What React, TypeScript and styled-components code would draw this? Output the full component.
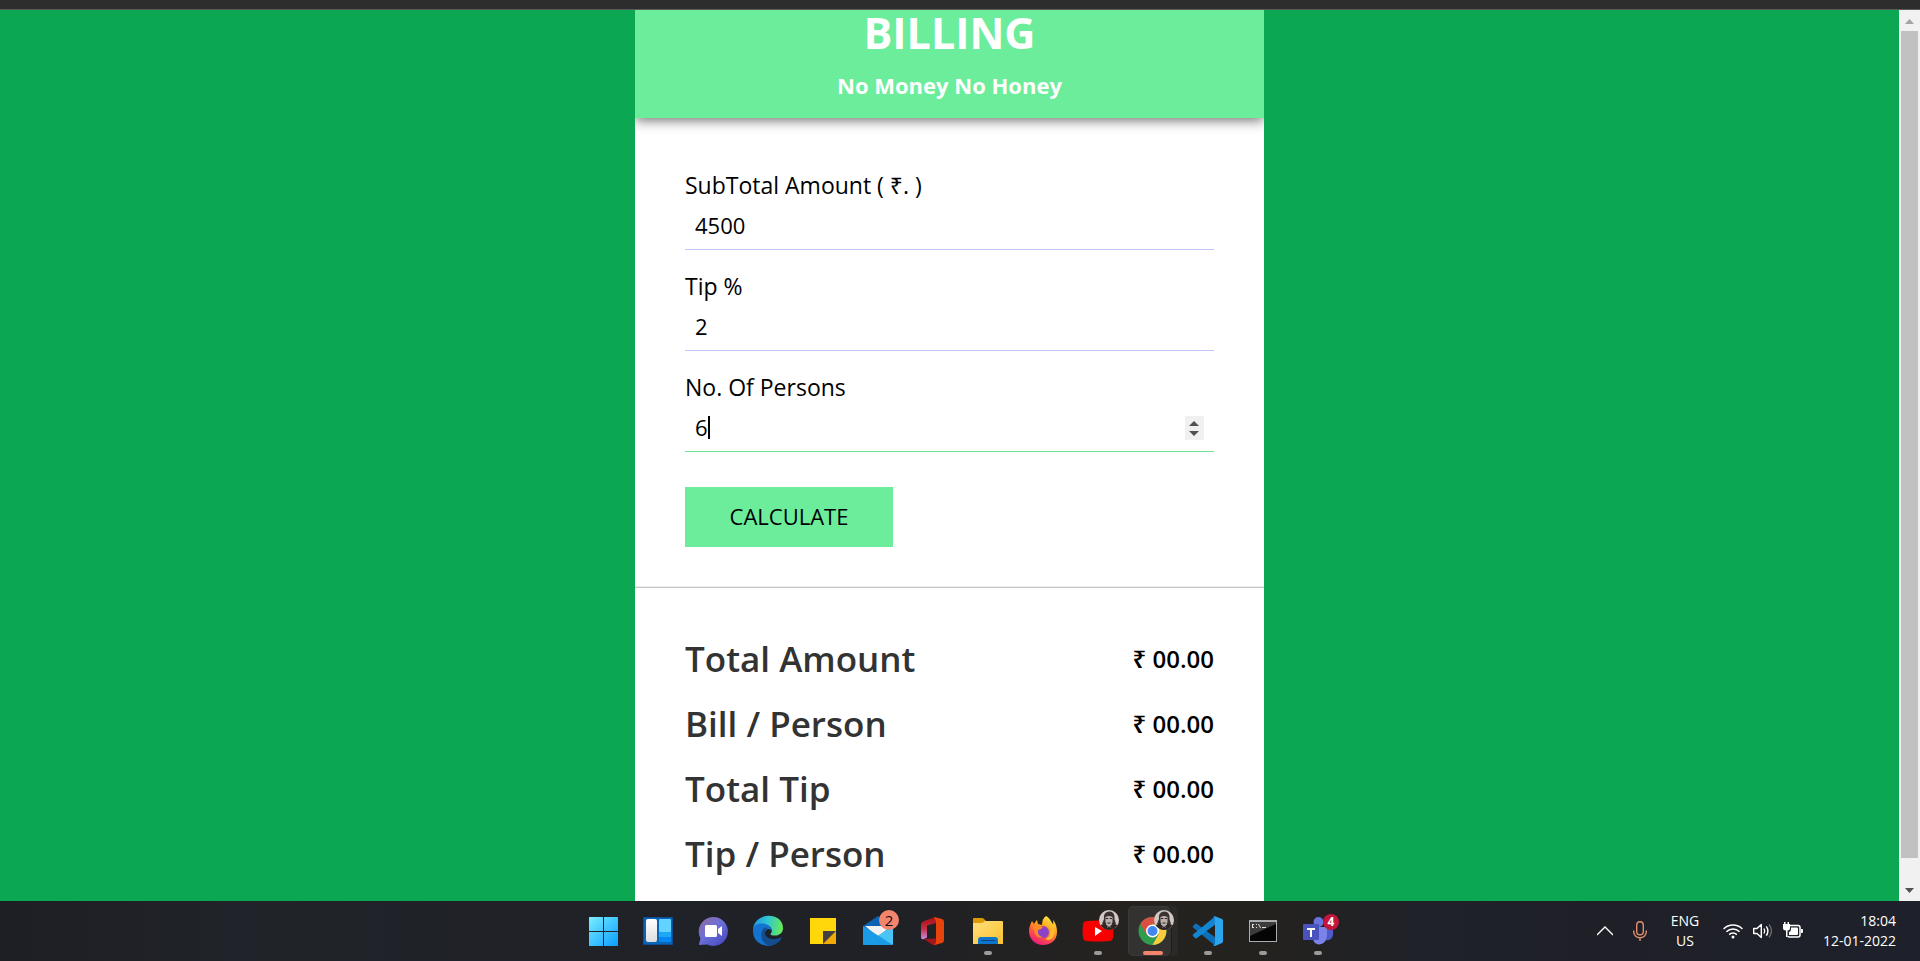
import React, { useState } from 'react';
import styled, { createGlobalStyle } from 'styled-components';

const GlobalStyle = createGlobalStyle`
  *, *::before, *::after { box-sizing: border-box; }
  body {
    margin: 0;
    font-family: "Open Sans", "Noto Sans", sans-serif;
    color: #000;
  }
  h1, h2, p, dl, dt, dd { margin: 0; }
`;

const Desktop = styled.div`
  min-height: 100vh;
  display: flex;
  flex-direction: column;
`;

const BrowserEdge = styled.div`
  height: 10px;
  background: #2d2d2d;
  border-bottom: 1px solid #5c5c5c;
`;

const Viewport = styled.div`
  flex: 1;
  display: flex;
  background: #0ca752;
`;

const Page = styled.main`
  flex: 1;
  display: flex;
  justify-content: center;
`;

const Card = styled.article`
  width: calc(100% / 3 - 4px);
  min-width: 400px;
  background: #fff;
`;

const CardHeader = styled.header`
  height: 108px;
  background: #6bed9c;
  color: #fff;
  text-align: center;
  box-shadow: 0 2px 12px rgba(0, 0, 0, 0.6);
  clip-path: inset(0 0 -20px 0);
`;

const Title = styled.h1`
  font-size: 43px;
  line-height: 46px;
  font-weight: 700;
`;

const Tagline = styled.h2`
  padding-top: 13px;
  font-size: 22px;
  line-height: 32px;
  font-weight: 700;
`;

const BillForm = styled.form`
  display: flex;
  flex-direction: column;
  align-items: flex-start;
  gap: 20px;
  padding: 51px 50px 40px;
  border-bottom: 1px solid #c8c8c8;
  box-shadow: inset 0 -1px 0 #eee;
`;

const Field = styled.div`
  width: 100%;
`;

const FieldLabel = styled.label`
  display: block;
  font-size: 23px;
  line-height: 32px;
`;

const InputBox = styled.div`
  position: relative;
  font-size: 22px;
`;

const Caret = styled.span`
  position: absolute;
  top: 13px;
  width: 2px;
  height: 23px;
  background: #000;
  pointer-events: none;
`;

const Stepper = styled.div`
  position: absolute;
  top: 13px;
  right: 10px;
  width: 19px;
  height: 24px;
  display: flex;
  flex-direction: column;
  background: #f0f0f0;
`;

const StepButton = styled.button`
  flex: 1;
  display: flex;
  align-items: center;
  justify-content: center;
  padding: 0;
  border: 0;
  background: transparent;
`;

const StepArrow = styled.svg`
  display: block;
  width: 10px;
  height: 12px;
`;

const NumberInput = styled.input`
  display: block;
  width: 100%;
  height: 49px;
  padding: 0 10px;
  border: 0;
  border-bottom: 1px solid #c3c5f8;
  outline: none;
  background: transparent;
  color: #000;
  caret-color: transparent;
  font: inherit;
  appearance: textfield;

  &:focus {
    border-bottom-color: #6ce697;
  }
  &::-webkit-inner-spin-button {
    appearance: none;
    margin: 0;
  }
`;

const CalculateButton = styled.button`
  width: 208px;
  height: 60px;
  margin-top: 15px;
  padding: 0 0 2px;
  border: 0;
  background: #6bed9c;
  color: #000;
  font-family: inherit;
  font-size: 22px;
`;

const Results = styled.dl`
  padding: 38px 50px 13px;
`;

const ResultRow = styled.div`
  display: flex;
  align-items: center;
  justify-content: space-between;
  height: 65px;
`;

const ResultName = styled.dt`
  color: #333;
  font-size: 35px;
  font-weight: 600;
`;

const ResultValue = styled.dd`
  font-size: 24px;
  font-weight: 600;
`;

const Scrollbar = styled.div`
  width: 21px;
  display: flex;
  flex-direction: column;
  align-items: center;
  background: #f1f1f1;
`;

const ScrollArrow = styled.svg`
  display: block;
  width: 21px;
  height: 21px;
`;

const ScrollThumb = styled.div`
  flex: 1;
  width: 17px;
  margin-bottom: 22px;
  background: #c1c1c1;
`;

const Taskbar = styled.footer`
  display: grid;
  grid-template-columns: 1fr auto 1fr;
  align-items: center;
  height: 60px;
  background: linear-gradient(90deg, #1d1f24 0%, #202329 12%, #1f2127 45%, #25221f 58%, #24221f 66%, #1f2229 74%, #1f2027 84%, #1e212b 100%);
  color: #fff;
`;

const AppList = styled.nav`
  grid-column: 2;
  display: flex;
  align-items: center;
  gap: 5px;
  padding-left: 1px;
`;

const AppButton = styled.button<{ $active?: boolean; $running?: boolean }>`
  position: relative;
  width: 50px;
  height: 50px;
  padding: 10px;
  border: 0;
  border-radius: 5px;
  background: ${p => (p.$active ? '#343230' : 'transparent')};
  box-shadow: ${p => (p.$active ? 'inset -6px 0 0 #2c2a28, inset -7px 0 0 #1f1d1c, inset 0 0 0 1px #3b3937' : 'none')};

  &::after {
    content: "";
    display: ${p => (p.$running ? 'block' : 'none')};
    position: absolute;
    left: 50%;
    bottom: 1px;
    width: ${p => (p.$active ? 20 : 8)}px;
    height: 4px;
    margin-left: ${p => (p.$active ? -10 : -4)}px;
    border-radius: 2px;
    background: ${p => (p.$active ? '#f4846c' : '#9a9a9a')};
  }
`;

const AppIcon = styled.svg`
  display: block;
  width: 30px;
  height: 30px;
  overflow: visible;
`;

const Badge = styled.span<{ $alert?: boolean }>`
  position: absolute;
  top: ${p => (p.$alert ? 8 : 4)}px;
  left: ${p => (p.$alert ? 30 : 26)}px;
  width: ${p => (p.$alert ? 16 : 20)}px;
  height: ${p => (p.$alert ? 16 : 20)}px;
  border-radius: 50%;
  background: ${p => (p.$alert ? '#c4163a' : '#f4846c')};
  color: ${p => (p.$alert ? '#fff' : '#111')};
  font-family: "Open Sans", sans-serif;
  font-size: ${p => (p.$alert ? 12 : 15)}px;
  font-weight: ${p => (p.$alert ? 700 : 400)};
  line-height: ${p => (p.$alert ? 16 : 20)}px;
  text-align: center;
`;

const AvatarPicture = styled.svg`
  position: absolute;
  top: 4px;
  left: 26px;
  width: 20px;
  height: 20px;
`;

const Tray = styled.div`
  grid-column: 3;
  display: flex;
  align-items: center;
  justify-content: flex-end;
  gap: 20px;
  padding-right: 24px;
`;

const TrayGroup = styled.div`
  display: flex;
  align-items: center;
  gap: 10px;
`;

const TrayIcon = styled.svg<{ $width: number }>`
  display: block;
  width: ${p => p.$width}px;
  height: 20px;
`;

const TrayText = styled.p<{ $end?: boolean }>`
  min-width: 36px;
  font-size: 14px;
  line-height: 20px;
  text-align: ${p => (p.$end ? 'right' : 'center')};
`;

const Avatar = () => (
  <AvatarPicture viewBox="0 0 20 20" aria-hidden="true">
    <circle cx="10" cy="10" r="10" fill="#cfc8c4" />
    <path d="M5 9Q4 2 10 1.500T15.500 9L17 14H3Z" fill="#3a3230" />
    <path d="M6.500 7Q10 5 13.500 7V12Q12 16 10 16T6.500 12Z" fill="#b9b0ab" />
    <path d="M7 8.500H9.200M10.800 8.500H13M8.500 13H11.500" stroke="#2b2322" strokeWidth="1.200" />
    <path d="M1.500 15 6 13.500 10 17 14 13.500 18.500 15Q15 20 10 20T1.500 15Z" fill="#2d2524" />
    <path d="M8 17.500 10 16 12 17.500" stroke="#8d8480" fill="none" />
  </AvatarPicture>
);

type AppEntry = {
  name: string;
  drawing: React.ReactNode;
  running?: boolean;
  active?: boolean;
  extra?: React.ReactNode;
};

const apps: AppEntry[] = [
  {
    name: 'Start',
    drawing: (
      <>
        <linearGradient id="win" x1="0" y1="0" x2="30" y2="30" gradientUnits="userSpaceOnUse">
          <stop stopColor="#7df1ff" /><stop offset="1" stopColor="#0a9cff" />
        </linearGradient>
        <path d="M1.500 1H15V15H1V1.500ZM16 1H29.500L30 1.500V15H16ZM1 16H15V30H1.500L1 29.500ZM16 16H30V29.500L29.500 30H16Z" fill="url(#win)" />
      </>
    ),
  },
  {
    name: 'Widgets',
    drawing: (
      <>
        <linearGradient id="wdg" x2="0" y2="1"><stop stopColor="#fff" /><stop offset="1" stopColor="#dedede" /></linearGradient>
        <rect y="1" width="30" height="28" rx="1" fill="#0c4d96" />
        <rect x="1" y="2" width="28" height="26" fill="#0866b8" />
        <rect x="3" y="3" width="11" height="23" rx="2" fill="url(#wdg)" />
        <rect x="16" y="3" width="12" height="13" rx="1" fill="#62d3ff" />
        <rect x="16" y="16" width="12" height="5" fill="#1da8f5" />
        <rect x="16" y="21" width="12" height="5" rx="1" fill="#0787ef" />
      </>
    ),
  },
  {
    name: 'Chat',
    drawing: (
      <>
        <linearGradient id="cht" x1=".1" y1=".1" x2=".8" y2=".9">
          <stop stopColor="#8a6aa8" /><stop offset=".45" stopColor="#6e71d8" /><stop offset="1" stopColor="#4b4fc4" />
        </linearGradient>
        <path d="M15 1A14.500 14.500 0 1 1 9 28.500L1.500 29Q.5 29 1 28L2.500 22.500A14.500 14.500 0 0 1 15 1Z" fill="url(#cht)" />
        <rect x="7" y="9" width="12" height="12" rx="1.500" fill="#fff" />
        <path d="M20 13 24 10V20L20 17Z" fill="#fff" />
      </>
    ),
  },
  {
    name: 'Edge',
    drawing: (
      <>
        <linearGradient id="edt" x1="0" y1=".5" x2="1" y2=".6">
          <stop stopColor="#2098df" /><stop offset=".45" stopColor="#2fc4d6" /><stop offset="1" stopColor="#6aec52" />
        </linearGradient>
        <path d="M0 14C1-5 30-4 30 12C30 18 25 20 20 19.500C16.500 19 17.500 18 18.500 16.500C20.500 11 14 8 9 8C4 8 1 11 0 14Z" fill="url(#edt)" />
        <path d="M0 14C1 9 5 7 10 7.500C15 8 19 11 18.500 15C16 10.500 11 14 11.500 19C12 25 20 28 28 22C24 29 17 30.500 12.500 29.500C5 28.500-.5 22 0 14Z" fill="#1473cf" />
        <path d="M12 11.500C8 14 7 20 10 25C12 28.500 15 30 18 29.700C22 29 26 26.500 28.500 22.500Q29 21 27.500 21.500C21 24.500 13.500 23 12 18C11.300 15.500 12 13 15 12Z" fill="#124d90" />
      </>
    ),
  },
  {
    name: 'Sticky Notes',
    drawing: (
      <>
        <path d="M2 2H28V28H15L2 28Z" fill="#ffd70a" />
        <path d="M28 15V28H15Z" fill="#f0aa08" />
        <path d="M15 15H28L15 28Z" fill="#44403f" />
      </>
    ),
  },
  {
    name: 'Mail',
    extra: <Badge>2</Badge>,
    drawing: (
      <>
        <path d="M0 10 15 0 30 10V20H0Z" fill="#0b61b2" />
        <path d="M2 10H28L15 21Z" fill="#f1f1f1" />
        <path d="M30 10 0 29H29Q30 29 30 28Z" fill="#48c4f5" />
        <path d="M0 10 30 29H1Q0 29 0 28Z" fill="#1b9be5" />
      </>
    ),
  },
  {
    name: 'Office',
    drawing: (
      <>
        <linearGradient id="off" x2="0" y2="1"><stop stopColor="#a51016" /><stop offset=".5" stopColor="#c62a3f" /><stop offset="1" stopColor="#c98be0" /></linearGradient>
        <path d="M17 1 5 5.500Q3 6.500 3 9V21Q3 24 6 23L9 21.500V9.500L18 7Z" fill="url(#off)" />
        <path d="M6 23 14 28.500Q16 29.500 18 29L22 26 18 22.500Z" fill="#a5161c" />
        <path d="M16 1 24 3Q26 3.500 26 6V24Q26 26.500 24 27L16.500 29 18 26V6Z" fill="#e8430d" />
      </>
    ),
  },
  {
    name: 'File Explorer',
    running: true,
    drawing: (
      <>
        <linearGradient id="fld" x1="0" y1="0" x2="1" y2="1"><stop stopColor="#ffe07c" /><stop offset="1" stopColor="#fbc02f" /></linearGradient>
        <path d="M0 3Q0 2 1 2H9Q10 2 11 3L13 5V9H0Z" fill="#dd9b06" />
        <path d="M0 7H8Q10 7 12 5H29Q30 5 30 6V28H0Z" fill="url(#fld)" />
        <path d="M5 28V24Q5 21 8 21H22Q25 21 25 24V28Z" fill="#0d75cb" />
        <rect x="8" y="24" width="14" height="1" fill="#0a4784" />
      </>
    ),
  },
  {
    name: 'Firefox',
    drawing: (
      <>
        <linearGradient id="ffx" x1=".8" y1="0" x2=".3" y2="1">
          <stop stopColor="#fff044" /><stop offset=".4" stopColor="#ffa01e" /><stop offset=".7" stopColor="#ff4d49" /><stop offset="1" stopColor="#e41b80" />
        </linearGradient>
        <path d="M18 0C23 3 23 6 25 8C26 8 25 5 25 4C28 7 29 12 29 16C29 24 23 29 15 29C7 29 1 23 1 15C1 12 2 9 3 7L4 5 6 8C8 5 8 5 9 4L10 8 14 9C14 5 15 2 18 0Z" fill="url(#ffx)" />
        <circle cx="15" cy="16" r="6" fill="#8a43c7" />
        <path d="M5 11Q9 8 15 11Q13 14 10 14Q9 20 15 21Q10 23 7 18Z" fill="#ff8a22" />
        <path d="M17 8Q25 10 22 18Q21 22 17 23Q23 26 26 19Q28 9 20 7Z" fill="#ffbd2e" />
      </>
    ),
  },
  {
    name: 'YouTube',
    running: true,
    extra: <Avatar />,
    drawing: (
      <>
        <path d="M4 5Q15 4 26 5Q30 5 30 9Q31 15 30 21Q30 25 26 25Q15 26 4 25Q0 25 0 21Q-1 15 0 9Q0 5 4 5Z" fill="#f90000" />
        <path d="M12 11 19 15 12 20Z" fill="#fff" />
      </>
    ),
  },
  {
    name: 'Chrome',
    running: true,
    active: true,
    extra: <Avatar />,
    drawing: (
      <>
        <circle cx="14.500" cy="15" r="14" fill="#2f9d4d" />
        <path d="M14.500 1A14 14 0 0 1 26.600 8H14.500V15L8.400 18.500 2.400 8A14 14 0 0 1 14.500 1Z" fill="#d94f43" />
        <path d="M14.500 8.500H26.800A14 14 0 0 1 14.500 29L20.500 18.500Z" fill="#fccb3d" />
        <circle cx="14.500" cy="15" r="6.500" fill="#fff" />
        <circle cx="14.500" cy="15" r="5" fill="#4286f4" />
      </>
    ),
  },
  {
    name: 'Visual Studio Code',
    running: true,
    drawing: (
      <>
        <path d="M2 8 0 10Q-.5 10.800 0 11.500L22 29.500 23 22 4 8Q3 7.200 2 8Z" fill="#0d6fb8" />
        <path d="M2 22 0 20Q-.5 19.200 0 18.500L22 .5 23 8 4 22Q3 22.800 2 22Z" fill="#1386d3" />
        <path d="M22 .2 29 3Q30 3.500 30 5V25Q30 26.500 29 27L22 30Q21 30 20 29Q22 29 22 27V3Q22 1 20 1Q21 0 22 .2Z" fill="#2aa5ee" />
      </>
    ),
  },
  {
    name: 'Command Prompt',
    running: true,
    drawing: (
      <>
        <rect x="1" y="4" width="28" height="22" fill="#a9adb0" />
        <rect x="2" y="6" width="26" height="19" fill="#050505" />
        <path d="M2 6H28V8L2 20Z" fill="#3c3c3c" />
        <path d="M4 8H6V9H5V11H6V12H4ZM8 8H9V9H8ZM8 11H9V12H8ZM10 8H11L13 12H12ZM14 11H18V12H14Z" fill="#ddd" />
      </>
    ),
  },
  {
    name: 'Teams',
    running: true,
    extra: <Badge $alert>4</Badge>,
    drawing: (
      <>
        <circle cx="15.500" cy="6" r="5" fill="#6b74dc" />
        <path d="M21 11H29Q30 11 30 12V19Q29 25 23 24Z" fill="#5059c9" />
        <path d="M10 11H24V20Q23 28 16 28.500Q11 28 10 23Z" fill="#7b83eb" />
        <rect y="8" width="16" height="16" rx="1" fill="#4a52bd" />
        <path d="M4 12H12V14H9V21H7V14H4Z" fill="#fff" />
      </>
    ),
  },
];

const fields = [
  { id: 'subtotal', label: 'SubTotal Amount ( ₹. )' },
  { id: 'tip', label: 'Tip %' },
  { id: 'persons', label: 'No. Of Persons' },
] as const;

type FieldId = (typeof fields)[number]['id'];

const resultNames = ['Total Amount', 'Bill / Person', 'Total Tip', 'Tip / Person'];

export default function App() {
  const [values, setValues] = useState<Record<FieldId, string>>({ subtotal: '4500', tip: '2', persons: '6' });
  const [focused, setFocused] = useState<FieldId>('persons');
  const [results, setResults] = useState(['00.00', '00.00', '00.00', '00.00']);

  const step = (id: FieldId, by: number) => setValues({ ...values, [id]: String(Number(values[id]) + by) });

  const calculate = (event: React.FormEvent) => {
    event.preventDefault();
    const subtotal = Number(values.subtotal);
    const tip = (subtotal * Number(values.tip)) / 100;
    const persons = Math.max(1, Number(values.persons));
    setResults([subtotal + tip, (subtotal + tip) / persons, tip, tip / persons].map(n => n.toFixed(2)));
  };

  return (
    <Desktop>
      <GlobalStyle />
      <BrowserEdge />
      <Viewport>
        <Page>
          <Card>
            <CardHeader>
              <Title>BILLING</Title>
              <Tagline>No Money No Honey</Tagline>
            </CardHeader>
            <BillForm onSubmit={calculate}>
              {fields.map(f => (
                <Field key={f.id}>
                  <FieldLabel htmlFor={f.id}>{f.label}</FieldLabel>
                  <InputBox>
                    <NumberInput
                      id={f.id}
                      type="number"
                      autoFocus={f.id === 'persons'}
                      value={values[f.id]}
                      onFocus={() => setFocused(f.id)}
                      onChange={e => setValues({ ...values, [f.id]: e.target.value })}
                    />
                    {focused === f.id && (
                      <>
                        <Caret style={{ left: `calc(10px + ${values[f.id].length}ch)` }} />
                        <Stepper>
                          <StepButton type="button" tabIndex={-1} aria-label={`Increase ${f.label}`} onClick={() => step(f.id, 1)}>
                            <StepArrow viewBox="0 0 10 12"><path d="M0 10 5 5 10 10Z" fill="#505050" /></StepArrow>
                          </StepButton>
                          <StepButton type="button" tabIndex={-1} aria-label={`Decrease ${f.label}`} onClick={() => step(f.id, -1)}>
                            <StepArrow viewBox="0 0 10 12"><path d="M0 3 5 8 10 3Z" fill="#505050" /></StepArrow>
                          </StepButton>
                        </Stepper>
                      </>
                    )}
                  </InputBox>
                </Field>
              ))}
              <CalculateButton type="submit">CALCULATE</CalculateButton>
            </BillForm>
            <Results>
              {resultNames.map((name, i) => (
                <ResultRow key={name}>
                  <ResultName>{name}</ResultName>
                  <ResultValue>₹ {results[i]}</ResultValue>
                </ResultRow>
              ))}
            </Results>
          </Card>
        </Page>
        <Scrollbar aria-hidden="true">
          <ScrollArrow viewBox="0 0 21 21"><path d="M6 14 10.500 9 15 14Z" fill="#a3a3a3" /></ScrollArrow>
          <ScrollThumb />
          <ScrollArrow viewBox="0 0 21 21"><path d="M6 8 10.500 13 15 8Z" fill="#505050" /></ScrollArrow>
        </Scrollbar>
      </Viewport>
      <Taskbar>
        <AppList aria-label="Taskbar">
          {apps.map(app => (
            <AppButton key={app.name} type="button" aria-label={app.name} $running={app.running} $active={app.active}>
              <AppIcon viewBox="0 0 30 30">{app.drawing}</AppIcon>
              {app.extra}
            </AppButton>
          ))}
        </AppList>
        <Tray>
          <TrayIcon $width={16} viewBox="0 0 16 20">
            <path d="M0 14 8 6 16 14" fill="none" stroke="#fff" strokeWidth="1.300" />
          </TrayIcon>
          <TrayIcon $width={14} viewBox="0 0 14 20" fill="none" stroke="#e08e6d" strokeWidth="1.400">
            <rect x="3.700" y=".7" width="6.600" height="13" rx="3.300" />
            <path d="M.7 9.500V10.500A6.300 6.300 0 0 0 13.300 10.500V9.500M7 16.800V20" />
          </TrayIcon>
          <TrayText>ENG<br />US</TrayText>
          <TrayGroup>
            <TrayIcon $width={20} viewBox="0 0 20 20" fill="none" stroke="#fff" strokeWidth="1.500">
              <path d="M.6 8A13.300 13.300 0 0 1 19.400 8M3.400 10.800A9.300 9.300 0 0 1 16.600 10.800M6.200 13.600A5.400 5.400 0 0 1 13.800 13.600" />
              <circle cx="10" cy="16" r="1.500" fill="#fff" stroke="none" />
            </TrayIcon>
            <TrayIcon $width={20} viewBox="0 0 20 20" fill="none" stroke="#fff" strokeWidth="1.400">
              <path d="M.7 7.500H4L8.300 3.500V16.500L4 12.500H.7Z" strokeLinejoin="round" />
              <path d="M11 7.500Q12.500 10 11 12.500M13.300 5.300Q16.500 10 13.300 14.700" />
              <path d="M16 3.500Q21 10 16 16.500" stroke="#666a70" />
            </TrayIcon>
            <TrayIcon $width={20} viewBox="0 0 20 20">
              <path d="M6 4.500H15Q17 4.500 17 6.500V14Q17 16 15 16H6Q5 16 5 15" fill="none" stroke="#fff" strokeWidth="1.500" />
              <path d="M8 6.500H14Q15 6.500 15 7.500V13Q15 14 14 14H6V11Q8 10.500 8 8.500ZM18 8H19Q20 8 20 9V11Q20 12 19 12H18ZM1 1H2.500V3H4.500V1H6V3H7V7Q7 9.500 4.500 9.500V16H3V9.500Q0 9.500 0 7V3H1Z" fill="#fff" />
            </TrayIcon>
          </TrayGroup>
          <TrayText $end>18:04<br />12-01-2022</TrayText>
        </Tray>
      </Taskbar>
    </Desktop>
  );
}
